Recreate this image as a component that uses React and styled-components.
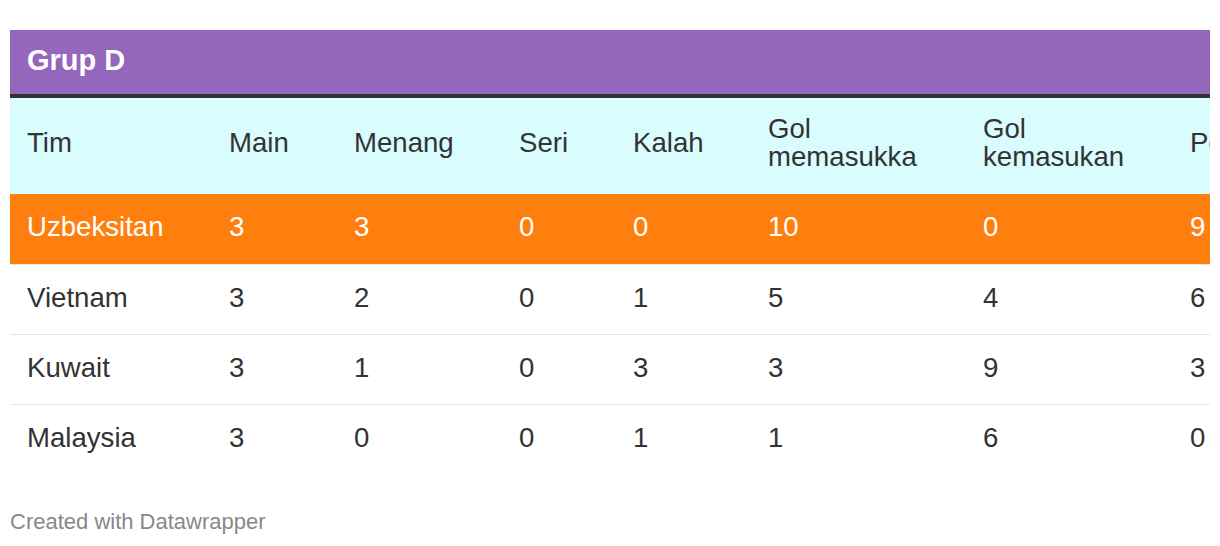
import React from "react"
import styled, { createGlobalStyle } from "styled-components"

const GlobalStyle = createGlobalStyle`
  body {
    margin: 0;
    background: #fff;
    font-family: "Liberation Sans", Helvetica, Arial, sans-serif;
    color: #333;
  }
`

const Wrapper = styled.div`
  margin: 30px 10px 0;
  overflow: hidden;
`

const Title = styled.div`
  background: #9467bd;
  color: #fff;
  font-weight: 700;
  font-size: 29px;
  height: 68px;
  box-sizing: border-box;
  padding: 0 0 4px 17px;
  display: flex;
  align-items: center;
  border-bottom: 4px solid #333;
`

const Table = styled.table`
  border-collapse: collapse;
  table-layout: fixed;
  width: 1363px;
  font-size: 27.6px;
`

const HeadCell = styled.th`
  background: #d9fdfe;
  font-weight: 400;
  text-align: left;
  vertical-align: middle;
  height: 96px;
  padding: 0 17px 7px;
  line-height: 28px;
  overflow: hidden;
  box-sizing: border-box;
`

const Row = styled.tr`
  background: ${({ highlight }) => (highlight ? "#ff7f0e" : "#fff")};
  color: ${({ highlight }) => (highlight ? "#fff" : "#333")};
  border-bottom: ${({ last }) => (last ? "none" : "1px solid #e5e5e5")};
`

const Cell = styled.td`
  height: 70px;
  padding: 0 17px 3px;
  box-sizing: border-box;
  vertical-align: middle;
  white-space: nowrap;
`

const Footer = styled.div`
  margin: 35px 10px 0;
  font-size: 22px;
  color: #888;
`

const widths = [202, 125, 165, 114, 135, 215, 207, 200]
const headers = ["Tim", "Main", "Menang", "Seri", "Kalah", "Gol memasukka", "Gol kemasukan", "Poin"]

const rows = [
  ["Uzbeksitan", 3, 3, 0, 0, 10, 0, 9],
  ["Vietnam", 3, 2, 0, 1, 5, 4, 6],
  ["Kuwait", 3, 1, 0, 3, 3, 9, 3],
  ["Malaysia", 3, 0, 0, 1, 1, 6, 0],
]

export default function App() {
  return (
    <>
      <GlobalStyle />
      <Wrapper>
        <Title>Grup D</Title>
        <Table>
          <colgroup>
            {widths.map((w, i) => <col key={i} style={{ width: w }} />)}
          </colgroup>
          <thead>
            <tr>
              {headers.map((h) => <HeadCell key={h}>{h}</HeadCell>)}
            </tr>
          </thead>
          <tbody>
            {rows.map((r, i) => (
              <Row key={r[0]} highlight={i === 0} last={i === rows.length - 1}>
                {r.map((v, j) => <Cell key={j}>{v}</Cell>)}
              </Row>
            ))}
          </tbody>
        </Table>
      </Wrapper>
      <Footer>Created with Datawrapper</Footer>
    </>
  )
}
